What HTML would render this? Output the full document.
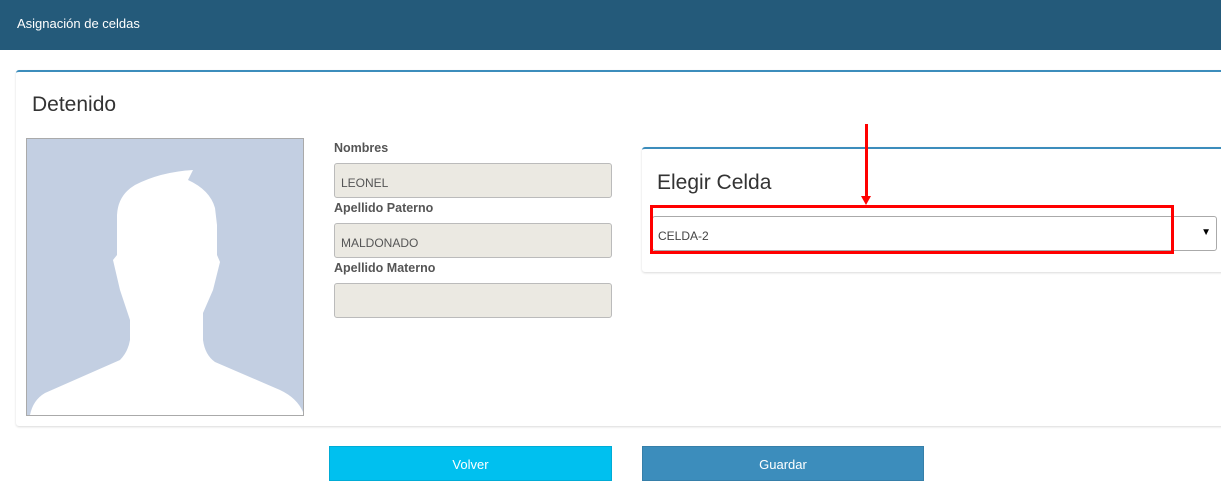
<!DOCTYPE html>
<html><head><meta charset="utf-8"><style>
*{box-sizing:border-box;margin:0;padding:0}
body{width:1221px;height:485px;background:#fff;font-family:"Liberation Sans",sans-serif;position:relative;overflow:hidden}
.top{position:absolute;left:0;top:0;width:1221px;height:50px;background:#245a7a;color:#fff;font-size:13px;padding:16px 0 0 17px}
.box{position:absolute;left:16px;top:70px;width:1215px;height:356px;border-top:2px solid #3c8dbc;border-radius:3px;box-shadow:0 1px 2px rgba(0,0,0,.15)}
h3{position:absolute;font-weight:normal;font-size:21px;color:#333}
.photo{position:absolute;left:26px;top:138px;width:278px;height:278px;border:1px solid #aaa;background:#c3cfe2}
.lbl{position:absolute;left:334px;font-size:12.5px;font-weight:bold;color:#555}
.inp{position:absolute;left:334px;width:278px;height:35px;background:#ebe9e2;border:1px solid #bbb;border-radius:3px;font-size:12px;color:#555;padding:12px 0 0 6px}
.box2{position:absolute;left:642px;top:147px;width:590px;height:125px;border-top:2px solid #3c8dbc;border-radius:3px;box-shadow:0 1px 2px rgba(0,0,0,.15)}
.sel{position:absolute;left:652px;top:216px;width:565px;height:35px;border:1px solid #aaa;border-radius:3px;font-size:12px;color:#444;padding:12px 0 0 5px}
.red{position:absolute;left:650px;top:205px;width:524px;height:49px;border:3px solid #f00}
.btn{position:absolute;top:446px;height:35px;color:#fff;font-size:13px;text-align:center;line-height:35px}
</style></head><body>
<div class="top">Asignación de celdas</div>
<div class="box"></div>
<h3 style="left:32px;top:93px">Detenido</h3>
<div class="photo"><svg width="276" height="276" viewBox="27 139 276 276" style="display:block"><path fill="#fff" d="M193 170L188 180Q210 190 215 208L217 225L217 255L220 262L213 290L203 313L203 340Q205 355 215 362L280 390Q297 398 303 412L303 415L30 415Q33 400 45 393L120 360Q128 352 130 340L130 320L120 290L113 260L117 255L117 215Q118 195 135 185Q160 172 193 170Z"/></svg></div>
<div class="lbl" style="top:141px">Nombres</div>
<div class="inp" style="top:163px">LEONEL</div>
<div class="lbl" style="top:201px">Apellido Paterno</div>
<div class="inp" style="top:223px">MALDONADO</div>
<div class="lbl" style="top:261px">Apellido Materno</div>
<div class="inp" style="top:283px"></div>
<div class="box2"></div>
<h3 style="left:657px;top:171px">Elegir Celda</h3>
<div class="sel">CELDA-2<span style="position:absolute;right:5px;top:10px;font-size:10px;color:#000">▼</span></div>
<div class="red"></div>
<div style="position:absolute;left:865px;top:124px;width:3px;height:76px;background:#f00"></div>
<div style="position:absolute;left:861px;top:196px;width:0;height:0;border-left:5px solid transparent;border-right:5px solid transparent;border-top:9px solid #f00"></div>
<div class="btn" style="left:329px;width:283px;background:#00c0ef;border:1px solid #00acd6">Volver</div>
<div class="btn" style="left:642px;width:282px;background:#3c8dbc;border:1px solid #367fa9">Guardar</div>
</body></html>
